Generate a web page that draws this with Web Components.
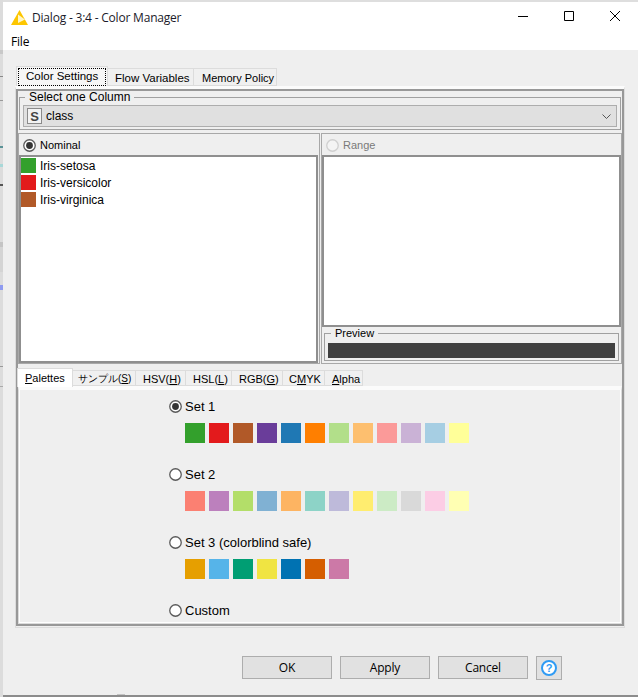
<!DOCTYPE html>
<html>
<head>
<meta charset="utf-8">
<title>Color Manager</title>
<style>
  html, body { margin: 0; padding: 0; background: #efefef; }
</style>
</head>
<body>
<kn-dialog heading="Dialog - 3:4 - Color Manager">
  <kn-color-settings></kn-color-settings>
</kn-dialog>

<script>
const SET_1 = ['#33a02c', '#e31a1c', '#b15928', '#6a3d9a', '#1f78b4', '#ff7f00', '#b2df8a', '#fdbf6f', '#fb9a99', '#cab2d6', '#a6cee3', '#ffff99'];
const SET_2 = ['#fb8072', '#bc80bd', '#b3de69', '#80b1d3', '#fdb462', '#8dd3c7', '#bebada', '#ffed6f', '#ccebc5', '#d9d9d9', '#fccde5', '#ffffb3'];
const SET_3 = ['#e69f00', '#56b4e9', '#009e73', '#f0e442', '#0072b2', '#d55e00', '#cc79a7'];

const UI_FONT = `"Liberation Sans", Arial, sans-serif`;
const WIN_FONT = `"Open Sans", "Noto Sans", sans-serif`;

class Base extends HTMLElement {
  constructor() {
    super();
    this.root = this.attachShadow({ mode: 'open' });
  }
}

// window chrome: title bar, menu, and the bits of the desktop showing on the left
class KnDialog extends Base {
  connectedCallback() {
    this.root.innerHTML = `
      <style>
        :host { display: flex; width: 638px; height: 697px; overflow: hidden; background: #dedede; font: 12px ${UI_FONT}; color: #000; }
        .strip {
          width: 3px; flex: none;
          background: linear-gradient(#dcdcdc 0 50px, #c8c8c8 50px 54px, #dcdcdc 54px 76px, #888 76px 77px, #dcdcdc 77px 100px,
            #999 100px 101px, #dcdcdc 101px 146px, #5a9296 146px 148px, #dcdcdc 148px 164px, #a8d8d8 164px 167px,
            #dcdcdc 167px 184px, #555 184px 186px, #dcdcdc 186px 242px, #c4c4c4 242px 247px, #d4d4d4 247px 272px,
            #dcdcdc 272px 285px, #8f9bf0 285px 290px, #dcdcdc 290px 366px, #999 366px 367px, #dcdcdc 367px 386px,
            #aaa 386px 387px, #dcdcdc 387px);
        }
        .window { flex: 1; display: flex; flex-direction: column; margin-top: 2px; min-width: 0; }
        .title { height: 30px; flex: none; background: #fff; display: flex; align-items: center; font: 12px ${WIN_FONT}; letter-spacing: -0.2px; }
        .logo { margin-left: 8px; width: 17px; height: 15px; flex: none; }
        .heading { margin-left: 4px; flex: 1; color: #1a1a2a; }
        .controls { display: flex; margin: 0 15px 2px 0; gap: 30px; }
        .controls svg { width: 16px; height: 16px; display: block; }
        .menu { height: 18px; flex: none; background: #fff; display: flex; align-items: center; padding-left: 8px; font: 12px ${WIN_FONT}; letter-spacing: -0.2px; }
        .content { flex: 1; background: #efefef; padding: 16px 0 0 12px; box-sizing: border-box; }
        .edge { height: 2px; flex: none; background: #8c8c8c; position: relative; }
        .edge i { position: absolute; left: 114px; top: -1px; width: 8px; height: 1px; background: #c4c4c4; }
      </style>
      <div class="strip"></div>
      <div class="window">
        <div class="title">
          <svg class="logo" viewBox="0 0 17 15">
            <path d="M8.5 0 L17 15 H0 Z" fill="#fdc600"/>
            <path d="M7 4.5 L14 9.4 L7 13 Z" fill="#fff6c8"/>
          </svg>
          <span class="heading">${this.getAttribute('heading')}</span>
          <div class="controls">
            <svg viewBox="0 0 16 16"><path d="M3 8.5 H13" stroke="#000" fill="none"/></svg>
            <svg viewBox="0 0 16 16"><path d="M3.5 3.5 H12.5 V12.5 H3.5 Z" stroke="#000" fill="none"/></svg>
            <svg viewBox="0 0 16 16"><path d="M3 3 L13 13 M13 3 L3 13" stroke="#000" fill="none"/></svg>
          </div>
        </div>
        <div class="menu">File</div>
        <div class="content"><slot></slot></div>
        <div class="edge"><i></i></div>
      </div>
    `;
  }
}

class KnTabs extends Base {
  connectedCallback() {
    this.root.innerHTML = `
      <style>
        :host { display: block; }
        .tabs { display: flex; align-items: flex-end; height: var(--tab-row, 20px); padding-left: var(--tab-inset, 1px); position: relative; z-index: 1; font-size: var(--tab-font, 11.5px); }
        .pane {
          box-sizing: border-box;
          height: var(--pane-height, auto);
          border: 1px solid #dcdcdc;
          border-top: var(--band, 3px) solid #fbfbfb;
          background: var(--pane-bg, #efefef);
        }
      </style>
      <div class="tabs"><slot name="tab"></slot></div>
      <div class="pane"><slot></slot></div>
    `;
  }
}

class KnTab extends Base {
  connectedCallback() {
    const selected = this.hasAttribute('selected');
    const focused = this.hasAttribute('focused');
    this.root.innerHTML = `
      <style>
        :host {
          display: flex; align-items: center;
          box-sizing: border-box; flex: none;
          width: ${this.getAttribute('width')}px;
          height: ${selected ? 'var(--tab-selected, 20px)' : 'var(--tab-normal, 18px)'};
          background: ${selected ? 'var(--tab-selected-bg, #f6f6f6)' : '#f0f0f0'};
          border: 1px solid #dcdcdc; border-bottom: ${selected ? 'none' : '1px solid #dcdcdc'};
          margin-left: ${selected ? '0' : '-1px'};
          margin-bottom: ${selected ? 'var(--tab-overlap, 0)' : '0'};
          white-space: nowrap;
        }
        .ring {
          ${focused ? 'outline: 1px dotted #000; outline-offset: -1px;' : ''}
          flex: 1; align-self: stretch; margin: 1px 1px 0; display: flex; align-items: center;
          padding-left: ${this.getAttribute('pad')}px;
          ${selected ? 'padding-bottom: 2px;' : ''}
        }
        u { text-underline-offset: 1px; }
      </style>
      <div class="ring"><span><slot></slot></span></div>
    `;
  }
}

class KnGroup extends Base {
  connectedCallback() {
    this.root.innerHTML = `
      <style>
        :host { display: block; }
        fieldset { margin: 0; padding: var(--group-pad, 2px 3px); border: 1px solid #a0a0a0; min-width: 0; }
        legend { margin-left: var(--legend-inset, 2px); padding: 0 4px; line-height: 12px; height: 12px; font-size: var(--legend-font, 12px); }
      </style>
      <fieldset><legend>${this.getAttribute('label')}</legend><slot></slot></fieldset>
    `;
  }
}

class KnCombo extends Base {
  connectedCallback() {
    this.root.innerHTML = `
      <style>
        :host { display: flex; align-items: center; box-sizing: border-box; height: 22px; background: #e0e0e0; border: 1px solid #adadad; padding: 0 4px 0 3px; }
        .type { box-sizing: border-box; width: 15px; height: 16px; border: 1px solid #8a8a8a; background: #f2f2f2; display: flex; align-items: center; justify-content: center; font: bold 13px "Liberation Sans", sans-serif; color: #444; }
        .value { flex: 1; margin-left: 4px; }
        svg { width: 9px; height: 5px; margin-right: 1px; }
      </style>
      <span class="type">S</span>
      <span class="value"><slot></slot></span>
      <svg viewBox="0 0 9 5"><path d="M.5 .5 L4.5 4.5 L8.5 .5" stroke="#555" fill="none"/></svg>
    `;
  }
}

class KnRadio extends Base {
  connectedCallback() {
    const checked = this.hasAttribute('checked');
    const disabled = this.hasAttribute('disabled');
    this.root.innerHTML = `
      <style>
        :host { display: flex; align-items: center; height: 16px; color: ${disabled ? '#7a7a7a' : '#000'}; font-size: var(--radio-font, 13px); }
        svg { width: 13px; height: 13px; flex: none; margin-right: var(--radio-gap, 3px); }
      </style>
      <svg viewBox="0 0 13 13">
        <circle cx="6.5" cy="6.5" r="5.75" fill="${disabled ? '#f4f4f4' : '#fff'}" stroke="${disabled ? '#cfcfcf' : '#5a5a5a'}" stroke-width="1.3"/>
        ${checked ? '<circle cx="6.5" cy="6.5" r="3.4" fill="#333"/>' : ''}
      </svg>
      <slot></slot>
    `;
  }
}

class KnColorRow extends Base {
  connectedCallback() {
    this.root.innerHTML = `
      <style>
        :host { display: flex; align-items: center; height: 15px; margin-bottom: 2px; }
        i { width: 15px; height: 15px; background: ${this.getAttribute('color')}; margin-right: 4px; flex: none; }
      </style>
      <i></i><slot></slot>
    `;
  }
}

class KnSwatches extends Base {
  connectedCallback() {
    const colors = this.getAttribute('colors').split(',');
    this.root.innerHTML = `
      <style>
        :host { display: flex; gap: 4px; margin-left: 16px; }
        i { width: 20px; height: 20px; flex: none; }
      </style>
      ${colors.map(c => `<i style="background:${c}"></i>`).join('')}
    `;
  }
}

class KnButton extends Base {
  connectedCallback() {
    this.root.innerHTML = `
      <style>
        :host { display: flex; align-items: center; justify-content: center; box-sizing: border-box; width: 90px; height: 23px; background: #e1e1e1; border: 1px solid #adadad; font: 12px ${WIN_FONT}; letter-spacing: -0.2px; color: #000; }
        :host([icon]) { width: 26px; height: 24px; }
      </style>
      <slot></slot>
    `;
  }
}

class KnColorSettings extends Base {
  connectedCallback() {
    this.root.innerHTML = `
      <style>
        :host { display: block; width: 610px; }
        .outer { --pane-height: 542px; }
        .frame { box-sizing: border-box; height: 537px; border: 2px solid #989898; }
        .column { margin: 0 1px; }
        .lists { display: flex; gap: 1px; height: 231px; margin-top: 3px; }
        .panel { box-sizing: border-box; border: 1px solid #a8a8a8; display: flex; flex-direction: column; }
        .panel.left { width: 302px; }
        .panel.right { width: 301px; }
        .head { height: 21px; flex: none; display: flex; align-items: center; padding: 1px 0 0 4px; box-sizing: border-box; --radio-font: 11px; --radio-gap: 4px; }
        .list { box-sizing: border-box; background: #fff; border: 2px solid #8f8f8f; flex: 1; padding-top: 1px; }
        .left .list { margin: 0 1px 0 0; }
        .right .list { flex: none; height: 172px; }
        .preview { margin: 0 2px; --group-pad: 4px 3px 2px 3px; --legend-font: 11px; --legend-inset: 3px; }
        .bar { height: 15px; background: #404040; }
        .lower {
          margin-top: 4px; display: block;
          --tab-row: 18px; --tab-inset: 0px; --tab-selected: 19px; --tab-normal: 16px; --tab-overlap: -1px; --tab-font: 11px;
          --tab-selected-bg: #fff; --pane-height: 238px; --band: 4px;
        }
        .lower [selected] { margin-left: -1px; }
        .palettes { padding: 8px 0 0 149px; border-left: 1px solid #fff; border-right: 1px solid #fff; border-bottom: 1px solid #fff; box-sizing: border-box; height: 233px; display: flex; flex-direction: column; }
        kn-swatches { margin-top: 9px; margin-bottom: 23px; }
        .buttons { display: flex; gap: 8px; margin: 28px 0 0 227px; }
      </style>
      <kn-tabs class="outer">
        <kn-tab slot="tab" width="92" pad="8" selected focused>Color Settings</kn-tab>
        <kn-tab slot="tab" width="87" pad="6">Flow Variables</kn-tab>
        <kn-tab slot="tab" width="84" pad="7" style="font-size:11px">Memory Policy</kn-tab>
        <div class="frame">
          <div class="column">
            <kn-group label="Select one Column"><kn-combo>class</kn-combo></kn-group>
          </div>
          <div class="lists">
            <div class="panel left">
              <div class="head"><kn-radio checked>Nominal</kn-radio></div>
              <div class="list">
                <kn-color-row color="${SET_1[0]}">Iris-setosa</kn-color-row>
                <kn-color-row color="${SET_1[1]}">Iris-versicolor</kn-color-row>
                <kn-color-row color="${SET_1[2]}">Iris-virginica</kn-color-row>
              </div>
            </div>
            <div class="panel right">
              <div class="head"><kn-radio disabled>Range</kn-radio></div>
              <div class="list"></div>
              <kn-group class="preview" label="Preview"><div class="bar"></div></kn-group>
            </div>
          </div>
          <kn-tabs class="lower">
            <kn-tab slot="tab" width="56" pad="6" selected><u>P</u>alettes</kn-tab>
            <kn-tab slot="tab" width="64" pad="4" style="font-size:10px">サンプル(<u>S</u>)</kn-tab>
            <kn-tab slot="tab" width="51" pad="6">HSV(<u>H</u>)</kn-tab>
            <kn-tab slot="tab" width="47" pad="6">HSL(<u>L</u>)</kn-tab>
            <kn-tab slot="tab" width="52" pad="6">RGB(<u>G</u>)</kn-tab>
            <kn-tab slot="tab" width="43" pad="5">C<u>M</u>YK</kn-tab>
            <kn-tab slot="tab" width="39" pad="6"><u>A</u>lpha</kn-tab>
            <div class="palettes">
              <kn-radio checked>Set 1</kn-radio>
              <kn-swatches colors="${SET_1}"></kn-swatches>
              <kn-radio>Set 2</kn-radio>
              <kn-swatches colors="${SET_2}"></kn-swatches>
              <kn-radio>Set 3 (colorblind safe)</kn-radio>
              <kn-swatches colors="${SET_3}"></kn-swatches>
              <kn-radio>Custom</kn-radio>
            </div>
          </kn-tabs>
        </div>
      </kn-tabs>
      <div class="buttons">
        <kn-button>OK</kn-button>
        <kn-button>Apply</kn-button>
        <kn-button>Cancel</kn-button>
        <kn-help></kn-help>
      </div>
    `;
  }
}

class KnHelp extends Base {
  connectedCallback() {
    this.root.innerHTML = `
      <style>
        :host { display: block; }
        .ring { box-sizing: border-box; width: 16px; height: 16px; border: 2px solid #2f9bf4; border-radius: 50%; background: #fff; display: flex; align-items: center; justify-content: center; font: bold 11px "Liberation Sans", sans-serif; color: #2f9bf4; }
      </style>
      <kn-button icon><span class="ring">?</span></kn-button>
    `;
  }
}

customElements.define('kn-dialog', KnDialog);
customElements.define('kn-tabs', KnTabs);
customElements.define('kn-tab', KnTab);
customElements.define('kn-group', KnGroup);
customElements.define('kn-combo', KnCombo);
customElements.define('kn-radio', KnRadio);
customElements.define('kn-color-row', KnColorRow);
customElements.define('kn-swatches', KnSwatches);
customElements.define('kn-button', KnButton);
customElements.define('kn-help', KnHelp);
customElements.define('kn-color-settings', KnColorSettings);
</script>
</body>
</html>
